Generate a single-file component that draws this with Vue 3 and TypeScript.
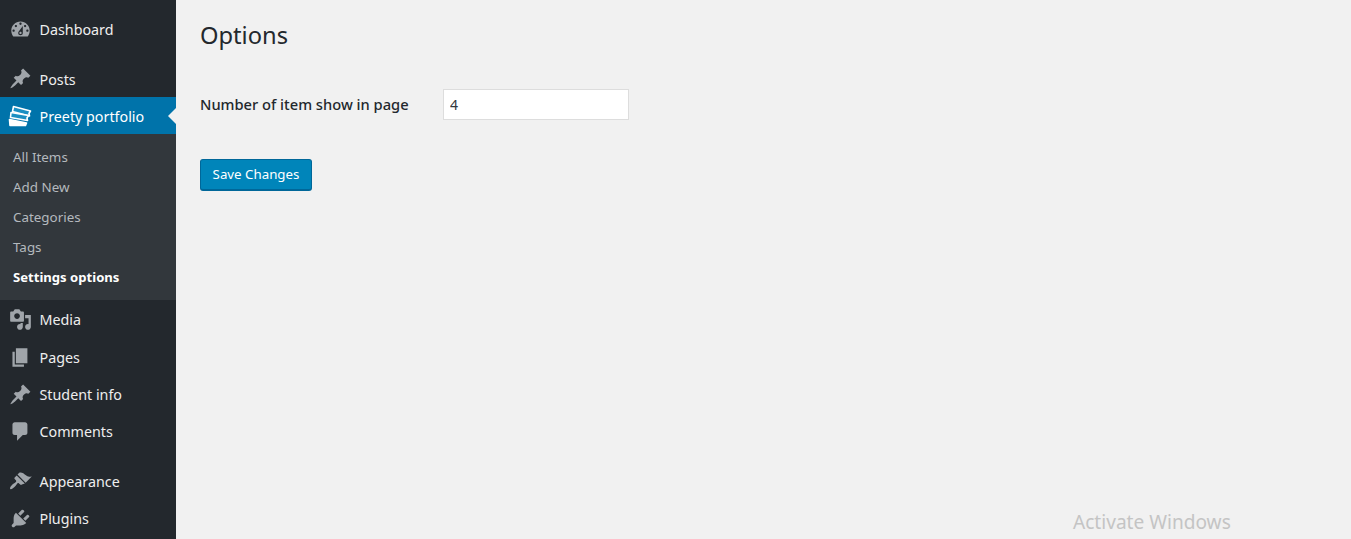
<template>
  <div class="page">
    <aside class="sidebar">
      <nav class="menu">
        <template v-for="item in menu" :key="item.label">
          <a class="item" :class="{ current: item.current, spaced: item.spaced, low: item.low }" href="#">
            <span class="icon">
              <svg v-if="item.icon" viewBox="0 0 20 20" width="23" height="23"><path :d="item.icon" /></svg>
              <svg v-else viewBox="0 0 24 22" width="24" height="22" class="tickets">
                <path d="M5.500 1.500l17 4.500-1.500 2.500.5 2.500-17-4.500z" />
                <path d="M3 7.500l17.500 3-1.500 2.500.5 2.500-17-3z" />
                <path class="solid" d="M1.500 14.500l17 3.500-1 2.500H2z" />
              </svg>
            </span>
            <span class="label">{{ item.label }}</span>
          </a>
          <ul v-if="item.current" class="submenu">
            <li v-for="sub in submenu" :key="sub" :class="{ active: sub === 'Settings options' }">{{ sub }}</li>
          </ul>
        </template>
      </nav>
    </aside>

    <main class="content">
      <h1>Options</h1>
      <div class="field">
        <label for="num">Number of item show in page</label>
        <input id="num" type="text" value="4" />
      </div>
      <button class="save" type="button">Save Changes</button>
      <div class="watermark">Activate Windows</div>
    </main>
  </div>
</template>

<script setup lang="ts">
interface MenuItem {
  label: string
  icon?: string
  current?: boolean
  spaced?: boolean
  low?: boolean
}

const pin = 'M10.44 3.02l1.82-1.82 6.36 6.35-1.83 1.82c-1.05-.68-2.48-.57-3.41.36l-.75.75c-.92.93-1.04 2.35-.35 3.41l-1.83 1.82-2.41-2.41-2.8 2.79c-.42.42-3.38 2.71-3.8 2.29s1.86-3.39 2.28-3.81l2.79-2.79L4.1 9.36l1.83-1.82c1.05.69 2.48.57 3.4-.36l.75-.75c.93-.92 1.05-2.35.36-3.41z'

const menu: MenuItem[] = [
  { label: 'Dashboard', icon: 'M3.76 16h12.48c1.1-1.37 1.76-3.11 1.76-5 0-4.42-3.58-8-8-8s-8 3.58-8 8c0 1.89.66 3.63 1.76 5zM10 4c.55 0 1 .45 1 1s-.45 1-1 1-1-.45-1-1 .45-1 1-1zM6 6c.55 0 1 .45 1 1s-.45 1-1 1-1-.45-1-1 .45-1 1-1zm8 0c.55 0 1 .45 1 1s-.45 1-1 1-1-.45-1-1 .45-1 1-1zm-5.37 5.55L12 7v6c0 1.1-.9 2-2 2s-2-.9-2-2c0-.57.24-1.08.63-1.45zM4 10c.55 0 1 .45 1 1s-.45 1-1 1-1-.45-1-1 .45-1 1-1zm12 0c.55 0 1 .45 1 1s-.45 1-1 1-1-.45-1-1 .45-1 1-1zm-5 3c0-.55-.45-1-1-1s-1 .45-1 1 .45 1 1 1 1-.45 1-1z' },
  { label: 'Posts', icon: pin, spaced: true, low: true },
  { label: 'Preety portfolio', current: true, low: true },
  { label: 'Media', icon: 'M13 11V4c0-.55-.45-1-1-1h-1.670L9 1H5L3.670 3H2c-.55 0-1 .45-1 1v7c0 .55.45 1 1 1h10c.55 0 1-.45 1-1zM7 4.500c1.380 0 2.500 1.120 2.500 2.500S8.380 9.500 7 9.500 4.500 8.380 4.500 7 5.620 4.500 7 4.500zM14 6h5v10.500c0 1.380-1.120 2.500-2.500 2.500S14 17.880 14 16.500s1.120-2.500 2.500-2.500c.17 0 .34.02.5.05V9h-3V6zm-4 8.050V13h2v3.500c0 1.380-1.120 2.500-2.500 2.500S7 17.880 7 16.500 8.120 14 9.500 14c.17 0 .34.02.5.05z' },
  { label: 'Pages', icon: 'M6 15V2h10v13H6zm-1 1h8v2H3V5h2v11z' },
  { label: 'Student info', icon: pin },
  { label: 'Comments', icon: 'M5 2h9c1.100 0 2 .9 2 2v7c0 1.100-.9 2-2 2h-2l-5 5v-5H5c-1.100 0-2-.9-2-2V4c0-1.100.9-2 2-2z' },
  { label: 'Appearance', icon: 'M14.480 11.060L7.410 3.990l1.500-1.500c.5-.56 2.300-.47 3.510.32 1.210.8 1.430 1.280 2.910 2.100 1.180.64 2.450 1.260 4.450.85zm-.71.71L6.700 4.700 4.930 6.470c-.39.39-.39 1.020 0 1.410l1.060 1.060c.39.39.39 1.030 0 1.420-.6.6-1.430 1.150-2.210 1.690-.35.26-.7.53-1.010.84-1.330 1.330-2.360 2.950-1.660 3.650.7.7 2.300-.32 3.630-1.670.31-.31.58-.66.85-1.010.54-.78 1.090-1.610 1.690-2.210.39-.39 1.020-.39 1.410 0l1.060 1.060c.39.39 1.020.39 1.410 0z', spaced: true },
  { label: 'Plugins', icon: 'M13.110 4.360L9.870 7.600 8 5.730l3.240-3.240c.35-.34 1.050-.2 1.560.32.52.51.66 1.210.31 1.550zm-8 1.770l.91-1.120 9.010 9.010-1.190.84c-.71.71-2.630 1.160-3.820 1.160H6.140L4.900 17.260c-.59.59-1.540.59-2.120 0-.59-.58-.59-1.530 0-2.120l1.240-1.240v-3.880c0-1.130.4-3.190 1.090-3.890zm7.260 3.970l3.240-3.240c.34-.35 1.040-.21 1.550.31.52.51.66 1.210.31 1.550l-3.240 3.250z' },
]

const submenu = ['All Items', 'Add New', 'Categories', 'Tags', 'Settings options']
</script>

<style>
html, body { margin: 0; height: 100%; overflow: hidden; background: #f1f1f1; }
</style>

<style scoped>
.page {
  display: flex;
  height: 539px;
  overflow: hidden;
  font-family: "Noto Sans", "Open Sans", sans-serif;
  background: #f1f1f1;
  color: #23282d;
}
.sidebar { width: 176px; flex: none; background: #23282d; padding-top: 11px; box-sizing: border-box; }
.menu { display: flex; flex-direction: column; }
.item {
  position: relative;
  display: flex;
  align-items: center;
  height: 37px;
  flex: none;
  color: #eee;
  font-size: 14.3px;
  text-decoration: none;
}
.item.spaced { margin-top: 12px; }
.item.spaced ~ .item.spaced { margin-top: 13.5px; }
.item.low .label { padding-top: 2px; }
.item.current { background: #0073aa; color: #fff; }
.item.current::after {
  content: "";
  position: absolute;
  right: 0;
  top: 50%;
  margin-top: -8px;
  border: 8px solid transparent;
  border-right-color: #f1f1f1;
}
.icon { width: 40px; flex: none; display: flex; justify-content: center; }
.icon svg { fill: #a0a5aa; display: block; }
.icon .tickets { fill: #1c8fc2; stroke: #fff; stroke-width: 1.6; stroke-linejoin: round; }
.icon .tickets .solid { fill: #fff; }
.label { margin-left: -0.5px; }
.submenu { list-style: none; margin: 0; padding: 8px 0; background: #32373c; }
.submenu + .item { margin-top: 0.5px; height: 38px; }
.submenu li { height: 30px; line-height: 30px; padding-left: 13px; font-size: 13.4px; color: #b4b9be; }
.submenu li.active { color: #fff; font-weight: 700; font-size: 13.1px; }
.content { position: relative; flex: 1; padding: 0 24px; }
h1 { margin: 19px 0 0; font-size: 23.7px; line-height: 33px; font-weight: 400; }
.field { display: flex; align-items: center; margin-top: 37px; }
.field label { width: 243px; flex: none; font-size: 14.7px; line-height: 20px; padding-bottom: 2px; font-weight: 500; }
.field input {
  width: 186px;
  height: 31px;
  box-sizing: border-box;
  padding: 0 6px;
  border: 1px solid #ddd;
  background: #fff;
  color: #32373c;
  font: 14px "Noto Sans", sans-serif;
}
.save {
  display: block;
  margin-top: 39px;
  width: 112px;
  height: 32px;
  padding: 0 0 2px;
  border: 1px solid #006799;
  border-bottom-width: 2px;
  border-radius: 3px;
  background: #0085ba;
  color: #fff;
  font: 13.3px "Noto Sans", sans-serif;
}
.watermark { position: absolute; left: 897px; top: 509px; font-size: 19.1px; color: #c4c4c4; }
</style>
